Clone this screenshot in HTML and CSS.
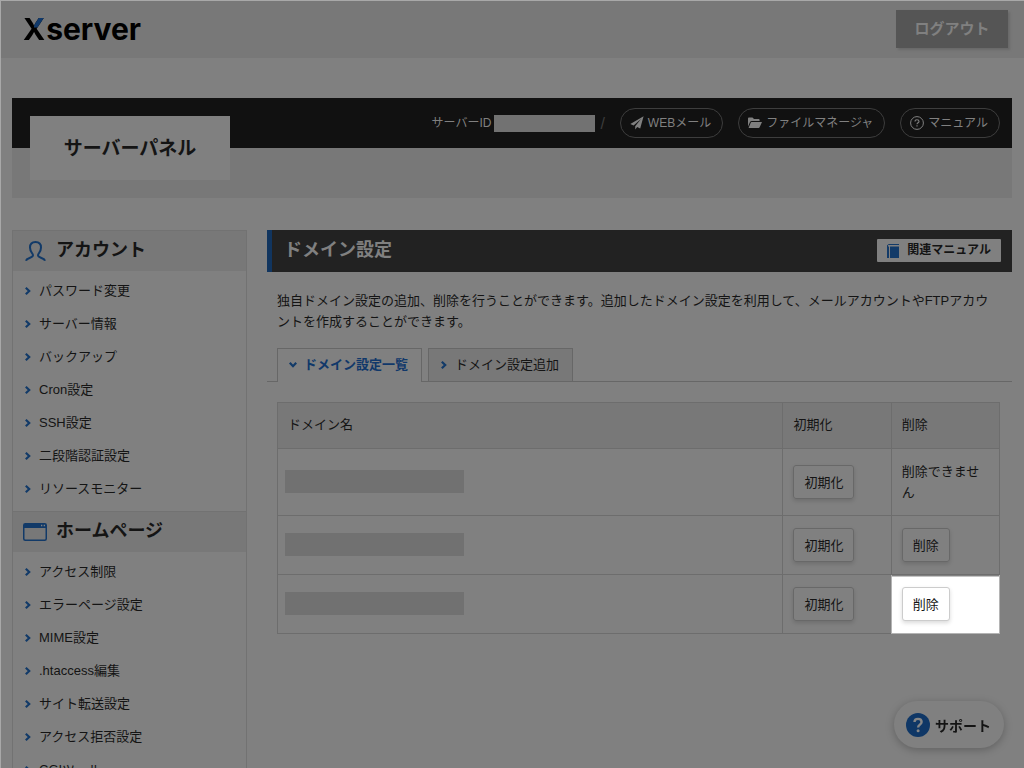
FILE: index.html
```html
<!DOCTYPE html>
<html lang="ja">
<head>
<meta charset="utf-8">
<title>サーバーパネル</title>
<link rel="stylesheet" href="styles.css">
</head>
<body>
<svg width="0" height="0" class="defs" aria-hidden="true">
  <symbol id="chev" viewBox="0 0 8 10"><path d="M1.8 1.8 5.2 5 1.8 8.2" fill="none" stroke="currentColor" stroke-width="2.2"/></symbol>
</svg>
<div class="page">
  <header class="top">
    <a class="logo" href="#"><span class="logo-x">X</span>server</a>
    <button class="logout" type="button">ログアウト</button>
  </header>

  <div class="hero">
    <h1 class="panel-name">サーバーパネル</h1>
    <div class="hero-bar">
      <span class="server-id">サーバーID<span class="id-mask"></span><span class="slash">/</span></span>
      <a class="pill" href="#"><svg class="i-plane" viewBox="0 0 14 14"><path d="M13.6.3.3 8l3.3 1.5L11 3 5.2 10.2v3.3l2-2.4 3 1.3z" fill="currentColor"/></svg>WEBメール</a>
      <a class="pill" href="#"><svg class="i-folder" viewBox="0 0 14 12"><path d="M0 9.5V1.6C0 1 .5.5 1.1.5H4.500L6 2H10.500C11.200 2 11.600 2.500 11.600 3.100V4H3.800C3 4 2.400 4.300 2 5z" fill="currentColor"/><path d="M3.500 5H14L11.600 10.300C11.400 10.700 11.100 11 10.600 11H.6L2.800 5.500C2.900 5.200 3.200 5 3.500 5z" fill="currentColor"/></svg>ファイルマネージャ</a>
      <a class="pill" href="#"><svg class="i-help" viewBox="0 0 14 14"><circle cx="7" cy="7" r="6.400" fill="none" stroke="currentColor"/><path d="M5 5.600C5 4.400 5.800 3.700 7 3.700S9 4.400 9 5.400C9 6.800 7 6.800 7 8.300M7 9.300V10.500" fill="none" stroke="currentColor" stroke-width="1.100"/></svg>マニュアル</a>
    </div>
  </div>

  <div class="columns">
    <nav class="side">
      <h2 class="side-head"><svg class="side-icon" viewBox="0 0 24 24"><path d="M3 21.700C3.500 19 10 19 10 16.300C10 14.300 7 13 7 8.500C7 5 9 3 12.500 3S18 5 18 8.500C18 13 15 14.300 15 16.300C15 19 21.500 19 22 21.700" fill="none" stroke="currentColor" stroke-width="2"/></svg>アカウント</h2>
      <ul class="side-list">
        <li><a href="#"><svg class="chev"><use href="#chev"/></svg>パスワード変更</a></li>
        <li><a href="#"><svg class="chev"><use href="#chev"/></svg>サーバー情報</a></li>
        <li><a href="#"><svg class="chev"><use href="#chev"/></svg>バックアップ</a></li>
        <li><a href="#"><svg class="chev"><use href="#chev"/></svg>Cron設定</a></li>
        <li><a href="#"><svg class="chev"><use href="#chev"/></svg>SSH設定</a></li>
        <li><a href="#"><svg class="chev"><use href="#chev"/></svg>二段階認証設定</a></li>
        <li><a href="#"><svg class="chev"><use href="#chev"/></svg>リソースモニター</a></li>
      </ul>
      <h2 class="side-head"><svg class="side-icon" viewBox="0 0 24 24"><rect x=".75" y="3.750" width="22.500" height="16.500" rx="1.500" fill="none" stroke="currentColor" stroke-width="1.500"/><path d="M1 4H23V8H1z" fill="currentColor"/><path d="M18 5.500h1.300M20.700 5.500H22" stroke="#808080" stroke-width="1.300"/></svg>ホームページ</h2>
      <ul class="side-list">
        <li><a href="#"><svg class="chev"><use href="#chev"/></svg>アクセス制限</a></li>
        <li><a href="#"><svg class="chev"><use href="#chev"/></svg>エラーページ設定</a></li>
        <li><a href="#"><svg class="chev"><use href="#chev"/></svg>MIME設定</a></li>
        <li><a href="#"><svg class="chev"><use href="#chev"/></svg>.htaccess編集</a></li>
        <li><a href="#"><svg class="chev"><use href="#chev"/></svg>サイト転送設定</a></li>
        <li><a href="#"><svg class="chev"><use href="#chev"/></svg>アクセス拒否設定</a></li>
        <li><a href="#"><svg class="chev"><use href="#chev"/></svg>CGIツール</a></li>
      </ul>
    </nav>

    <main class="main">
      <div class="title-bar">
        <h2 class="title">ドメイン設定</h2>
        <a class="related" href="#"><svg class="i-book" viewBox="0 0 12 14"><path d="M2 .5H12M.5 1.500V14M.5 2C.5 1 1 .5 2 .5" fill="none" stroke="currentColor"/><path d="M1 2.500H2V14H1zM3 2.500H12V14H3z" fill="currentColor"/></svg>関連マニュアル</a>
      </div>
      <p class="lead">独自ドメイン設定の追加、削除を行うことができます。追加したドメイン設定を利用して、メールアカウントやFTPアカウントを作成することができます。</p>
      <div class="tabs">
        <a class="tab tab-on" href="#"><svg class="chev down"><use href="#chev"/></svg>ドメイン設定一覧</a>
        <a class="tab" href="#"><svg class="chev"><use href="#chev"/></svg>ドメイン設定追加</a>
      </div>
      <table class="domains">
        <thead>
          <tr><th class="c-name">ドメイン名</th><th>初期化</th><th>削除</th></tr>
        </thead>
        <tbody>
          <tr><td><span class="name-mask"></span></td><td><button class="btn" type="button">初期化</button></td><td>削除できません</td></tr>
          <tr><td><span class="name-mask"></span></td><td><button class="btn" type="button">初期化</button></td><td><button class="btn" type="button">削除</button></td></tr>
          <tr><td><span class="name-mask"></span></td><td><button class="btn" type="button">初期化</button></td><td class="spot"><button class="btn" type="button">削除</button></td></tr>
        </tbody>
      </table>
    </main>
  </div>

  <button class="support" type="button"><svg class="i-support" viewBox="0 0 24 24"><circle cx="12" cy="12" r="12" fill="#0f3766"/><path d="M8.500 9C8.500 7 10 5.900 12 5.900S15.600 7 15.600 9C15.600 11.600 12.100 11.600 12.100 14.500" fill="none" stroke="#858585" stroke-width="2.400"/><circle cx="12.100" cy="17.800" r="1.500" fill="#858585"/></svg>サポート</button>
</div>
</body>
</html>
```
FILE: styles.css
```css
* { box-sizing: border-box; }

body {
  margin: 0;
  background: #808080;
  color: #141414;
  font: 13px/21px "Liberation Sans", "Noto Sans CJK JP", sans-serif;
}

a { color: inherit; text-decoration: none; }
button { font-family: inherit; color: inherit; }
.defs { position: absolute; }

.page {
  height: 100vh;
  overflow: hidden;
  border-top: 1px solid #a8a8a8;
  border-left: 1px solid #a8a8a8;
}

.top {
  display: flex;
  justify-content: space-between;
  align-items: center;
  height: 57px;
  padding: 0 16px 2px 22px;
  background: #787878;
}

.logo {
  color: #000;
  font: 700 30px/38px Inter, sans-serif;
}

.logo-x {
  margin-right: 1px;
  color: transparent;
  background: linear-gradient(#10396b, #10396b) 100% 0 / 50% 46% no-repeat, #000;
  -webkit-background-clip: text;
  background-clip: text;
}

.logout {
  width: 112px;
  height: 38px;
  padding: 0 0 2px;
  border: 0;
  background: #555;
  color: #808080;
  font-size: 15px;
  font-weight: 700;
  box-shadow: 2px 2px 2px #6a6a6a;
}

.hero {
  position: relative;
  height: 100px;
  margin: 40px 12px 0 11px;
  background: #787878;
}

.hero-bar {
  display: flex;
  justify-content: flex-end;
  align-items: center;
  gap: 15px;
  height: 50px;
  padding-right: 12px;
  background: #111;
  color: #808080;
  font-size: 12px;
}

.panel-name {
  position: absolute;
  left: 18px;
  top: 18px;
  width: 200px;
  height: 64px;
  margin: 0;
  padding-top: 2px;
  background: #808080;
  font-size: 19px;
  line-height: 62px;
  text-align: center;
}

.server-id { display: flex; align-items: center; }

.id-mask {
  width: 101px;
  height: 17px;
  margin: 0 5px 0 3px;
  background: #727272;
}

.slash { color: #3c3c3c; font-size: 16px; }

.pill {
  display: flex;
  align-items: center;
  gap: 4px;
  height: 30px;
  padding: 0 11px 0 9px;
  border: 1px solid #3d3d3d;
  border-radius: 15px;
}

.i-plane, .i-help { width: 14px; height: 14px; }
.i-folder { width: 14px; height: 12px; }

.columns {
  display: flex;
  align-items: flex-start;
  gap: 20px;
  margin: 32px 12px 0 11px;
}

.side {
  flex: 0 0 235px;
  border: 1px solid #727272;
}

.side-head {
  display: flex;
  align-items: center;
  gap: 9px;
  height: 40px;
  margin: 0;
  padding: 0 0 1px 10px;
  background: #787878;
  font-size: 18px;
}

.side-list + .side-head { height: 41px; border-top: 1px solid #727272; }
.side-icon { width: 24px; height: 24px; color: #123a68; }

.side-list {
  margin: 0;
  padding: 3px 0 6px;
  list-style: none;
}

.side-list a {
  display: flex;
  align-items: center;
  gap: 7px;
  height: 33px;
  padding-left: 11px;
}

.chev { width: 8px; height: 10px; color: #123a68; }
.down { transform: rotate(90deg); }

.main { flex: 1; min-width: 0; }

.title-bar {
  display: flex;
  align-items: center;
  justify-content: space-between;
  height: 42px;
  padding: 0 11px 1px 12px;
  border-left: 5px solid #11355f;
  background: #222;
}

.title { margin: 0; color: #808080; font-size: 18px; }

.related {
  display: flex;
  align-items: center;
  gap: 8px;
  height: 23px;
  padding: 0 10px;
  border-radius: 1px;
  background: #808080;
  font-size: 12px;
  font-weight: 700;
}

.i-book { width: 12px; height: 14px; color: #123a68; }

.lead { margin: 18px 15px 16px 10px; }

.tabs {
  display: flex;
  gap: 6px;
  padding-left: 10px;
  border-bottom: 1px solid #676767;
}

.tab {
  display: flex;
  align-items: center;
  gap: 7px;
  height: 33px;
  padding: 0 13px 1px 11px;
  border: 1px solid #676767;
  border-bottom: 0;
  background: #787878;
}

.tab-on {
  height: 34px;
  margin-bottom: -1px;
  padding-bottom: 2px;
  background: #808080;
  color: #10386a;
  font-weight: 700;
}

.domains {
  width: calc(100% - 22px);
  margin: 20px 12px 0 10px;
  table-layout: fixed;
  border-spacing: 0;
  border: solid #6d6d6d;
  border-width: 1px 0 0 1px;
}

.domains th, .domains td {
  height: 59px;
  width: 15%;
  padding: 0 10px;
  border: solid #6d6d6d;
  border-width: 0 1px 1px 0;
  font-weight: 400;
  text-align: left;
}

.domains th { height: 46px; padding-bottom: 2px; background: #787878; }
.domains .c-name { width: 70%; }
.domains tbody tr:first-child td { height: 67px; }
.domains td:first-child { padding: 0 7px 2px; }

.name-mask {
  display: block;
  width: 179px;
  height: 23px;
  background: #717171;
}

.btn {
  height: 34px;
  padding: 0 10px 2px;
  border: 1px solid #686868;
  border-radius: 3px;
  background: transparent;
  font-size: 13px;
  box-shadow: 0 2px 4px rgba(0, 0, 0, .15);
}

.domains .spot {
  background: #fff;
  border-color: #b4b4b4;
  box-shadow: -1px 0 #b4b4b4, inset 0 1px #808080, inset 0 2px #c4c4c4;
}

.spot .btn { border-color: #ccc; background: #fff; }

.support {
  position: fixed;
  right: 20px;
  bottom: 20px;
  display: flex;
  align-items: center;
  gap: 5px;
  height: 47px;
  padding: 0 13px 0 12px;
  border: 0;
  border-radius: 24px;
  background: #808080;
  font-size: 14px;
  font-weight: 700;
  box-shadow: 0 2px 8px rgba(0, 0, 0, .25);
}

.i-support { width: 24px; height: 24px; }
```
